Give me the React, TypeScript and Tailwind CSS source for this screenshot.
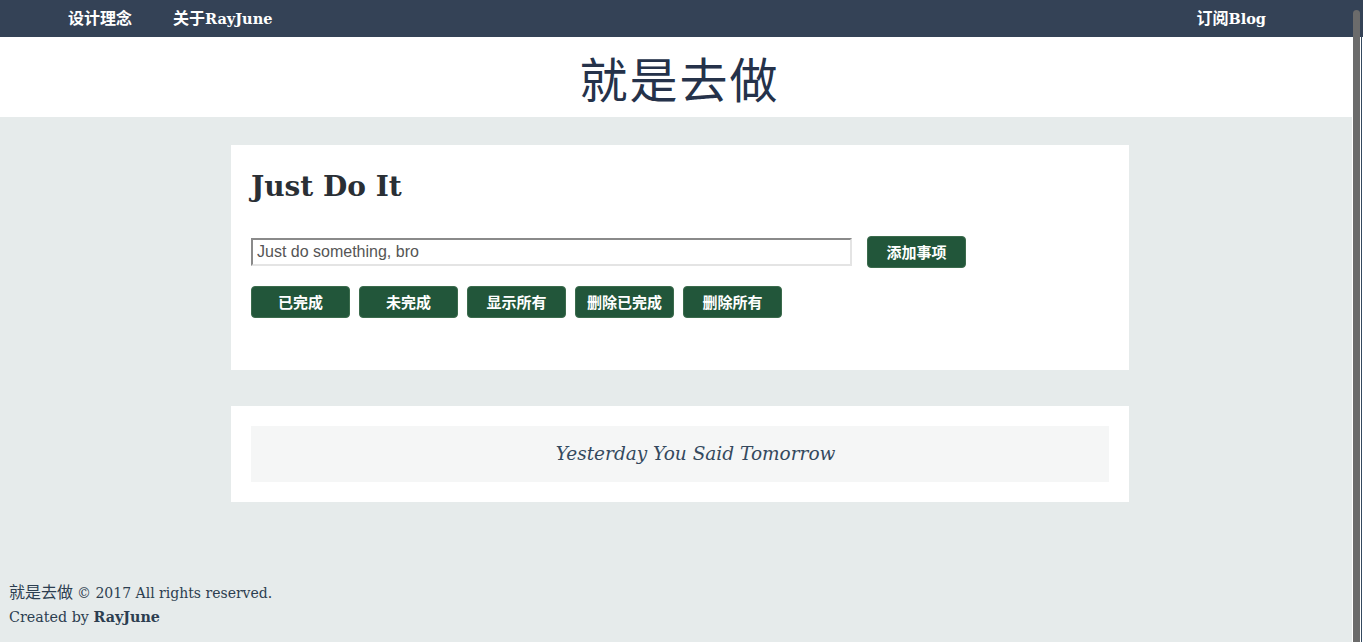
import React from "react";

const dj = { fontFamily: '"DejaVu Serif", "Noto Sans CJK SC", serif' };

export default function App() {
  const btn =
    "h-[32px] w-[99px] rounded-[4px] border border-[#3b6b4c] bg-[#22563a] text-white text-[15px] font-bold flex items-center justify-center";
  return (
    <div
      className="relative min-h-[642px] bg-[#e6ebeb] text-[#2c3e50] overflow-hidden"
      style={{ fontFamily: '"Liberation Serif", "Noto Sans CJK SC", serif' }}
    >
      <nav className="h-[37px] bg-[#344256] flex items-center pl-[68px] pr-[97px] text-white font-bold text-[16px]">
        <a className="mr-[41px]">设计理念</a>
        <a>
          关于<span style={dj} className="text-[14.5px]">RayJune</span>
        </a>
        <a className="ml-auto">
          订阅<span style={dj} className="text-[14.5px]">Blog</span>
        </a>
      </nav>
      <header className="h-[80px] bg-white flex items-center justify-center">
        <h1
          className="text-[48px] tracking-[2px] text-[#25324a] leading-none pr-[4px]"
          style={{ fontFamily: '"Noto Sans CJK SC", serif', fontWeight: 400 }}
        >
          就是去做
        </h1>
      </header>
      <main className="w-[898px] pt-[28px] ml-[231px]">
        <section className="bg-white px-[20px] pt-[26px] h-[225px]">
          <h2 className="text-[28px] font-bold text-[#2a2f35] leading-[32px]" style={dj}>
            Just Do It
          </h2>
          <div className="flex items-center mt-[33px]">
            <input
              defaultValue=""
              placeholder="Just do something, bro"
              className="w-[601px] h-[28px] border-2 border-t-[#8a8a8a] border-l-[#8a8a8a] border-r-[#e4e4e4] border-b-[#e4e4e4] px-[4px] text-[16px] text-[#555] placeholder:text-[#555] outline-none"
              style={{ fontFamily: '"Liberation Sans", Arial, sans-serif' }}
            />
            <button className={btn + " ml-[15px]"} style={{ fontFamily: '"Noto Sans CJK SC", sans-serif' }}>
              添加事项
            </button>
          </div>
          <div className="flex gap-[9px] mt-[18px]" style={{ fontFamily: '"Noto Sans CJK SC", sans-serif' }}>
            <button className={btn}>已完成</button>
            <button className={btn}>未完成</button>
            <button className={btn}>显示所有</button>
            <button className={btn}>删除已完成</button>
            <button className={btn}>删除所有</button>
          </div>
        </section>
        <section className="bg-white p-[20px] mt-[36px]">
          <div className="bg-[#f5f6f6] h-[56px] flex items-center justify-center pl-[31px]">
            <p className="italic text-[18.5px] text-[#34495e]" style={dj}>
              Yesterday You Said Tomorrow
            </p>
          </div>
        </section>
      </main>
      <footer className="px-[9px] pt-[79px] text-[16px] leading-[24px] text-[#2c3e50]">
        <p>
          就是去做 <span style={dj} className="text-[14px]">© 2017 All rights reserved.</span>
        </p>
        <p style={dj} className="text-[14.3px]">
          Created by <b>RayJune</b>
        </p>
      </footer>
      <div className="absolute right-0 top-0 bottom-0 w-[11px] bg-[#e6ebeb]">
        <div className="absolute top-0 left-0 right-0 h-[37px] bg-[#344256]" />
        <div className="absolute left-0 top-[37px] bottom-0 w-[11px] bg-white" />
        <div className="absolute left-[1px] top-[10px] bottom-0 w-[7px] rounded-t-full bg-[#6b6b6b]" />
        <div className="absolute right-[1px] top-[36px] bottom-0 w-[1px] bg-[#34495e]" />
      </div>
    </div>
  );
}
